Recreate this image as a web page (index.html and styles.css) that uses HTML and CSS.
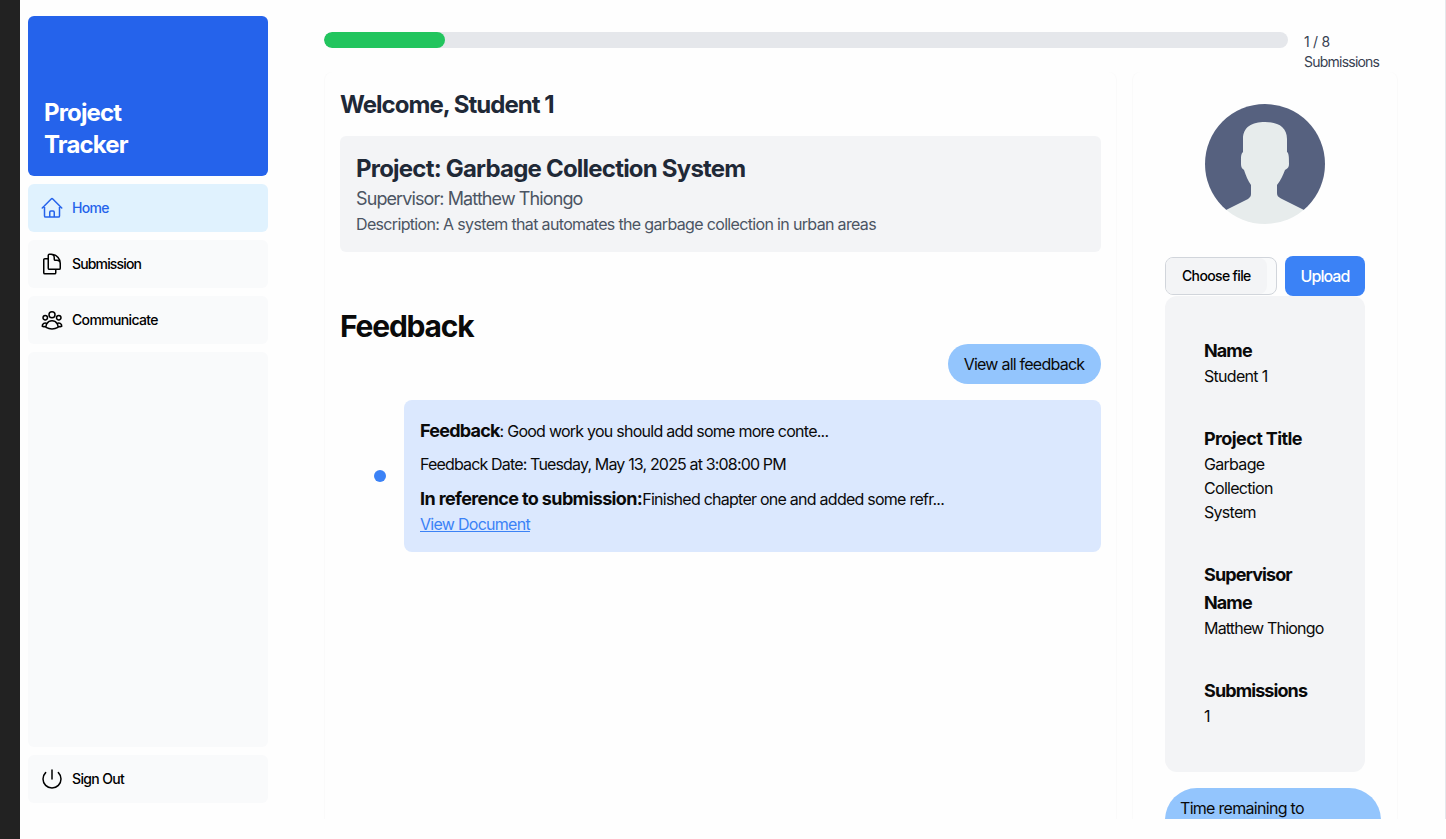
FILE: index.html
```html
<!DOCTYPE html>
<html lang="en">
<head>
<meta charset="utf-8">
<title>Project Tracker</title>
<link rel="stylesheet" href="styles.css">
</head>
<body>
<div class="app">
  <nav class="sidebar">
    <a class="brand"><span>Project<br>Tracker</span></a>
    <a class="nav-item active">
      <svg viewBox="0 0 24 24"><path d="m2.25 12 8.954-8.955c.44-.439 1.152-.439 1.591 0L21.75 12M4.5 9.75v10.125c0 .621.504 1.125 1.125 1.125H9.75v-4.875c0-.621.504-1.125 1.125-1.125h2.25c.621 0 1.125.504 1.125 1.125V21h4.125c.621 0 1.125-.504 1.125-1.125V9.75M8.25 21h8.25"/></svg>
      <span>Home</span>
    </a>
    <a class="nav-item submission">
      <svg viewBox="0 0 24 24"><path d="M15.75 17.25v3.375c0 .621-.504 1.125-1.125 1.125h-9.75a1.125 1.125 0 0 1-1.125-1.125V7.875c0-.621.504-1.125 1.125-1.125H6.75a9.06 9.06 0 0 1 1.5.124m7.5 10.376h3.375c.621 0 1.125-.504 1.125-1.125V11.25c0-4.46-3.243-8.161-7.5-8.876a9.06 9.06 0 0 0-1.5-.124H9.375c-.621 0-1.125.504-1.125 1.125v3.5m7.5 10.375H9.375a1.125 1.125 0 0 1-1.125-1.125v-9.25m12 6.625v-1.875a3.375 3.375 0 0 0-3.375-3.375h-1.5a1.125 1.125 0 0 1-1.125-1.125v-1.5a3.375 3.375 0 0 0-3.375-3.375H9.75"/></svg>
      <span>Submission</span>
    </a>
    <a class="nav-item">
      <svg viewBox="0 0 24 24"><path d="M18 18.72a9.094 9.094 0 0 0 3.741-.479 3 3 0 0 0-4.682-2.72m.94 3.198.001.031c0 .225-.012.447-.037.666A11.944 11.944 0 0 1 12 21c-2.17 0-4.207-.576-5.963-1.584A6.062 6.062 0 0 1 6 18.719m12 0a5.971 5.971 0 0 0-.941-3.197m0 0A5.995 5.995 0 0 0 12 12.75a5.995 5.995 0 0 0-5.058 2.772m0 0a3 3 0 0 0-4.681 2.72 8.986 8.986 0 0 0 3.74.477m.94-3.197a5.971 5.971 0 0 0-.94 3.197M15 6.75a3 3 0 1 1-6 0 3 3 0 0 1 6 0Zm6 3a2.25 2.25 0 1 1-4.5 0 2.25 2.25 0 0 1 4.5 0Zm-13.5 0a2.25 2.25 0 1 1-4.5 0 2.25 2.25 0 0 1 4.5 0Z"/></svg>
      <span>Communicate</span>
    </a>
    <div class="filler"></div>
    <a class="nav-item">
      <svg viewBox="0 0 24 24"><path d="M5.636 5.636a9 9 0 1 0 12.728 0M12 3v9"/></svg>
      <span>Sign Out</span>
    </a>
  </nav>
  <main class="main">
    <header class="progress">
      <div class="track"><div class="bar" style="width:12.5%"></div></div>
      <p class="count"><span class="ratio">1 / 8</span><br>Submissions</p>
    </header>
    <div class="columns">
      <section class="content">
        <h1 class="welcome">Welcome, Student 1</h1>
        <div class="project">
          <h2>Project: Garbage Collection System</h2>
          <p class="supervisor">Supervisor: Matthew Thiongo</p>
          <p class="description">Description: A system that automates the garbage collection in urban areas</p>
        </div>
        <h2 class="feedback-title">Feedback</h2>
        <button class="view-all">View all feedback</button>
        <div class="entry">
          <span class="dot"></span>
          <article class="note">
            <p class="tall"><strong class="label">Feedback</strong><span>: Good work you should add some more conte...</span></p>
            <p class="date">Feedback Date: Tuesday, May 13, 2025 at 3:08:00 PM</p>
            <p class="tall"><strong>In reference to submission:</strong><span>Finished chapter one and added some refr...</span></p>
            <a class="link">View Document</a>
          </article>
        </div>
      </section>
      <aside class="profile">
        <svg class="avatar" viewBox="0 0 120 120">
          <path fill="#56617f" d="M0 0H120V106H0Z"/>
          <path fill="#e7ecec" d="M60 18C47 18 38 23 38 35V48C35.500 50 36 54 36 60C36 64 38 65 39 66C41 72 43 77 46 81V90C46 92 45 93.500 43 95L21.500 105.800L0 116V120H120V116L98.500 105.800L76 94.500C73 93 72 91.500 72 89V81C76 76 78 71 80 66C83 64.500 84 63 84 60C84 54 84 49 82 48V35C82 23 73 18 60 18Z"/>
        </svg>
        <div class="upload-row">
          <div class="file"><span>Choose file</span></div>
          <button class="upload">Upload</button>
        </div>
        <dl class="details">
          <div><dt>Name</dt><dd>Student 1</dd></div>
          <div><dt class="title">Project Title</dt><dd>Garbage<br>Collection<br>System</dd></div>
          <div><dt>Supervisor<br>Name</dt><dd class="person">Matthew Thiongo</dd></div>
          <div><dt>Submissions</dt><dd>1</dd></div>
        </dl>
        <div class="deadline">Time remaining to</div>
      </aside>
    </div>
  </main>
</div>
</body>
</html>
```
FILE: styles.css
```css
* { box-sizing: border-box; margin: 0; padding: 0; }
body {
  height: 839px;
  overflow: hidden;
  background: #fefefe;
  border-left: 20px solid #222;
  color: #0a0a0a;
  font: 400 16px/24px Inter, Roboto, sans-serif;
  letter-spacing: -0.7px;
}
button { font: inherit; letter-spacing: inherit; border: 0; color: inherit; }
.app { display: flex; height: 819px; border-right: 1px solid #e5e7eb; }
.sidebar { display: flex; flex-direction: column; gap: 8px; width: 256px; padding: 16px 8px; flex: none; }
.brand {
  display: flex; align-items: flex-end; height: 160px; padding: 17px 16px 15px;
  background: #2563eb; color: #fff; border-radius: 6px;
  font-size: 24px; line-height: 32px; font-weight: 700; letter-spacing: -0.85px;
}
.nav-item {
  display: flex; align-items: center; gap: 8px; height: 48px; padding: 12px;
  background: #f9fafb; border-radius: 6px; color: #000;
  font-size: 14px; font-weight: 450; line-height: 20px; letter-spacing: -0.65px;
}
.submission { letter-spacing: -0.85px; }
.nav-item svg { width: 24px; height: 24px; fill: none; stroke: currentColor; stroke-width: 1.5; stroke-linecap: round; stroke-linejoin: round; }
.nav-item.active { background: #e0f2fe; color: #2563eb; }
.filler { flex: 1; background: #f9fafb; border-radius: 6px; }
.main { flex: 1; min-width: 0; padding: 32px 47px 0 48px; display: flex; flex-direction: column; }
.progress { display: flex; gap: 16px; height: 40px; }
.track { width: 964px; height: 16px; border-radius: 8px; background: #e5e7eb; overflow: hidden; }
.bar { height: 100%; border-radius: 8px; background: #22c55e; }
.count { font-size: 14px; line-height: 20px; color: #374151; letter-spacing: -0.77px; }
.ratio { letter-spacing: -0.3px; }
.columns { display: flex; gap: 15px; flex: 1; min-height: 0; }
.content { flex: none; width: 793px; padding: 17px 16.5px 16px 16px; border-radius: 8px 8px 0 0; box-shadow: inset 1px 0 #fafafa, inset -1px 0 #fafafa; }
.welcome { font-size: 24px; line-height: 32px; font-weight: 700; letter-spacing: -0.97px; color: #1f2937; margin-bottom: 15px; }
.project { height: 116px; padding: 17px 16px 15px; background: #f3f4f6; border-radius: 6px; color: #4b5563; }
.project h2 { font-size: 24px; line-height: 32px; font-weight: 700; letter-spacing: -0.79px; color: #1f2937; }
.supervisor { font-size: 18px; line-height: 28px; letter-spacing: -0.9px; }
.description { line-height: 22px; letter-spacing: -0.66px; }
.feedback-title { margin-top: 56px; font-size: 30px; line-height: 36px; font-weight: 700; letter-spacing: -1.2px; }
.view-all { display: block; margin-left: auto; width: 153px; height: 40px; border-radius: 20px; background: #93c5fd; white-space: nowrap; letter-spacing: -0.76px; }
.entry { display: flex; align-items: center; gap: 18px; margin: 16px 0 0 34px; }
.dot { width: 12px; height: 12px; border-radius: 50%; background: #3b82f6; }
.note { flex: 1; height: 152px; padding: 17px 16px 15px; border-radius: 8px; background: #dbe8fe; white-space: nowrap; }
.tall { line-height: 28px; letter-spacing: -0.75px; }
.tall strong { font-size: 18px; font-weight: 700; letter-spacing: -0.62px; }
.tall .label { letter-spacing: -0.78px; }
.date { margin: 7px 0 9px; letter-spacing: -0.84px; }
.link { display: block; line-height: 22px; color: #3b82f6; text-decoration: underline; letter-spacing: -0.72px; }
.profile { flex: none; width: 266px; padding: 32px 32px 0 33px; overflow: hidden; border-radius: 8px 8px 0 0; box-shadow: inset 1px 0 #fafafa, inset -1px 0 #fafafa; }
.avatar { display: block; width: 120px; height: 120px; margin: 0 0 32px 40px; border-radius: 50%; }
.upload-row { display: flex; align-items: center; gap: 8px; width: 200px; }
.file { width: 112px; height: 38px; border: 1px solid #d1d5db; border-radius: 8px; background: #f9fafb; font-size: 14px; font-weight: 450; color: #000; overflow: hidden; letter-spacing: -0.65px; }
.file span { display: block; width: 101px; height: 36px; padding-left: 16px; line-height: 36px; border-radius: 0 8px 8px 0; background: #f3f4f6; }
.upload { width: 80px; height: 40px; border-radius: 8px; background: #3b82f6; color: #fff; font-weight: 500; letter-spacing: -0.95px; }
.details { display: flex; flex-direction: column; gap: 36px; width: 200px; height: 476px; padding: 40px 39px; border-radius: 12px; background: #f3f4f6; white-space: nowrap; }
.details dt { padding-top: 1px; margin-bottom: -1px; font-size: 18px; line-height: 28px; font-weight: 700; letter-spacing: -0.9px; }
.details .title { letter-spacing: -0.6px; }
.details .person { letter-spacing: -0.82px; }
.deadline { width: 216px; height: 64px; margin-top: 16px; padding: 8px 15px; border-radius: 32px; background: #93c5fd; }
```
